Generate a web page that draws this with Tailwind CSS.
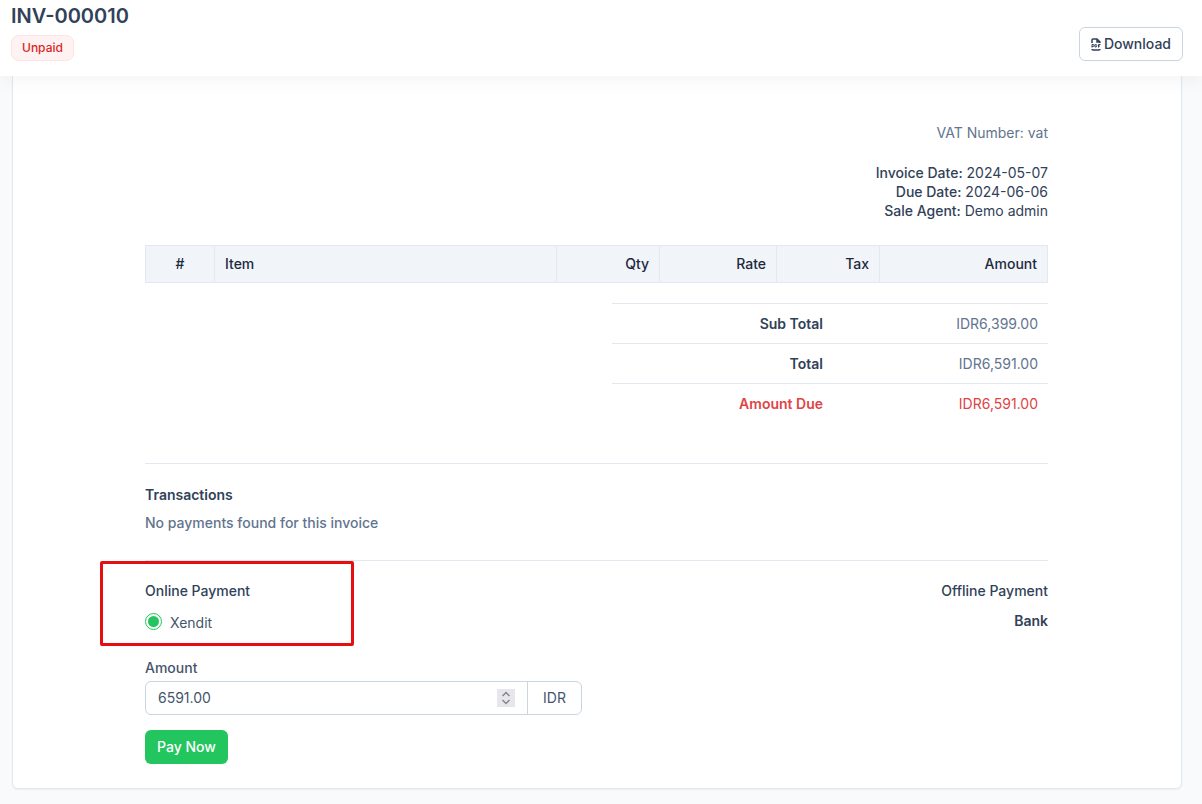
<!DOCTYPE html>
<html lang="en">
<head>
    <meta charset="UTF-8">
    <meta name="viewport" content="width=device-width, initial-scale=1.0">
    <title>INV-000010</title>
    <script src="https://cdn.jsdelivr.net/npm/@tailwindcss/browser@4"></script>
</head>
<body class="min-h-screen bg-slate-50 font-['Inter',sans-serif] text-sm text-slate-600">
    <!-- sticky invoice header -->
    <header class="sticky top-0 z-10 flex h-[76px] items-start justify-between bg-white pl-[11px] pr-[19px] shadow-[0_6px_16px_rgba(0,0,0,0.04)]">
        <div class="pt-0.5">
            <h1 class="text-xl leading-7 font-semibold text-slate-700">INV-000010</h1>
            <span class="mt-[5px] block w-fit rounded-lg border border-red-100 bg-red-50 px-[10px] py-1 text-xs leading-4 font-medium text-[#dc2626]">Unpaid</span>
        </div>
        <button type="button" class="mt-[27px] flex h-[34px] items-center gap-[3px] rounded-md border border-slate-300 bg-white px-[11px] font-medium text-slate-700">
            <svg class="h-[13px] w-[10px]" viewBox="0 0 20 26" fill="none" stroke="currentColor" stroke-width="3">
                <path d="M2 10V4a2 2 0 0 1 2-2h8l6 6v2M12 2v6h6M2 22v0a2 2 0 0 0 2 2h12a2 2 0 0 0 2-2v0"/>
                <path stroke-width="2" d="M2 19v-6h2a1.5 1.5 0 0 1 0 4H2M8 13v5h1.500a2 2 0 0 0 2-2v-1a2 2 0 0 0-2-2zM15 19v-6h4M15 16h3"/>
            </svg>
            Download
        </button>
    </header>

    <main class="-mt-1 mr-5 mb-4 ml-3 rounded-md border border-slate-200 bg-white pt-[50px] pr-[133px] pb-6 pl-[132px] shadow-xs">
        <div class="text-right">
            <p class="leading-5 text-slate-500">VAT Number: vat</p>
            <div class="mt-5 leading-[19px] text-slate-700">
                <p><span class="font-medium">Invoice Date:</span> 2024-05-07</p>
                <p><span class="font-medium">Due Date:</span> 2024-06-06</p>
                <p><span class="font-medium">Sale Agent:</span> Demo admin</p>
            </div>
        </div>

        <table class="mt-[25px] w-full table-fixed border-collapse border border-slate-200 bg-slate-100 text-slate-800">
            <thead>
                <tr class="h-[37px] [&>th]:border [&>th]:border-slate-200 [&>th]:px-[10px] [&>th]:font-medium">
                    <th class="w-[69px] text-center">#</th>
                    <th class="text-left">Item</th>
                    <th class="w-[103px] text-right">Qty</th>
                    <th class="w-[117px] text-right">Rate</th>
                    <th class="w-[103px] text-right">Tax</th>
                    <th class="w-[168px] text-right">Amount</th>
                </tr>
            </thead>
        </table>

        <table class="mt-5 ml-auto w-[436px] table-fixed text-right">
            <tbody>
                <tr class="h-10 border-t border-slate-200">
                    <th scope="row" class="w-[221px] px-[10px] text-right font-semibold text-slate-700">Sub Total</th>
                    <td class="px-[10px] text-slate-500">IDR6,399.00</td>
                </tr>
                <tr class="h-10 border-t border-slate-200">
                    <th scope="row" class="px-[10px] text-right font-semibold text-slate-700">Total</th>
                    <td class="px-[10px] text-slate-500">IDR6,591.00</td>
                </tr>
                <tr class="h-10 border-t border-slate-200 text-[#e04444]">
                    <th scope="row" class="px-[10px] text-right font-semibold">Amount Due</th>
                    <td class="px-[10px]">IDR6,591.00</td>
                </tr>
            </tbody>
        </table>

        <section class="mt-[39px] border-t border-slate-200 pt-[21px] font-medium">
            <h2 class="font-semibold text-slate-700">Transactions</h2>
            <p class="mt-2 text-slate-500">No payments found for this invoice</p>
        </section>

        <form class="mt-[27px] border-t border-slate-200 pt-5">
            <div class="flex justify-between">
                <div class="relative">
                    <h2 class="font-medium text-slate-700">Online Payment</h2>
                    <div class="mt-3 flex gap-2">
                        <input type="radio" id="xendit" name="paymentmode" checked class="h-[17px] w-[17px] appearance-none rounded-full border border-[#22c55e] bg-white bg-clip-content p-[2px] checked:bg-[#22c55e]">
                        <label for="xendit">Xendit</label>
                    </div>
                    <!-- highlight around the gateway -->
                    <div class="pointer-events-none absolute -top-5 -left-[45px] h-[85px] w-[254px] rounded-xs border-3 border-[#e60f0f]"></div>
                </div>
                <div class="text-right text-slate-700">
                    <h2 class="font-medium">Offline Payment</h2>
                    <p class="mt-[10px] font-semibold">Bank</p>
                </div>
            </div>

            <label for="amount" class="mt-[25px] block font-medium">Amount</label>
            <div class="mt-[3px] flex h-[34px] w-[437px] items-center rounded-md border border-slate-300">
                <input type="number" id="amount" name="amount" step="0.01" value="6591.00" class="min-w-0 flex-1 appearance-none pl-3 text-slate-600 outline-none [appearance:textfield]">
                <button type="button" aria-label="Change amount" class="mr-3 flex h-[18px] w-[18px] items-center justify-center bg-[#e6e6ec] text-[#85858d]">
                    <svg class="h-[14px] w-[10px]" viewBox="0 0 10 14" fill="none" stroke="currentColor" stroke-width="1.500">
                        <path d="M1.500 5L5 1.500L8.500 5M1.500 9L5 12.500L8.500 9"/>
                    </svg>
                </button>
                <span class="flex h-full w-[54px] items-center justify-center border-l border-slate-300">IDR</span>
            </div>
            <button type="submit" class="mt-[15px] h-[34px] rounded-md bg-[#22c55e] px-3 font-medium text-white">Pay Now</button>
        </form>
    </main>
</body>
</html>
